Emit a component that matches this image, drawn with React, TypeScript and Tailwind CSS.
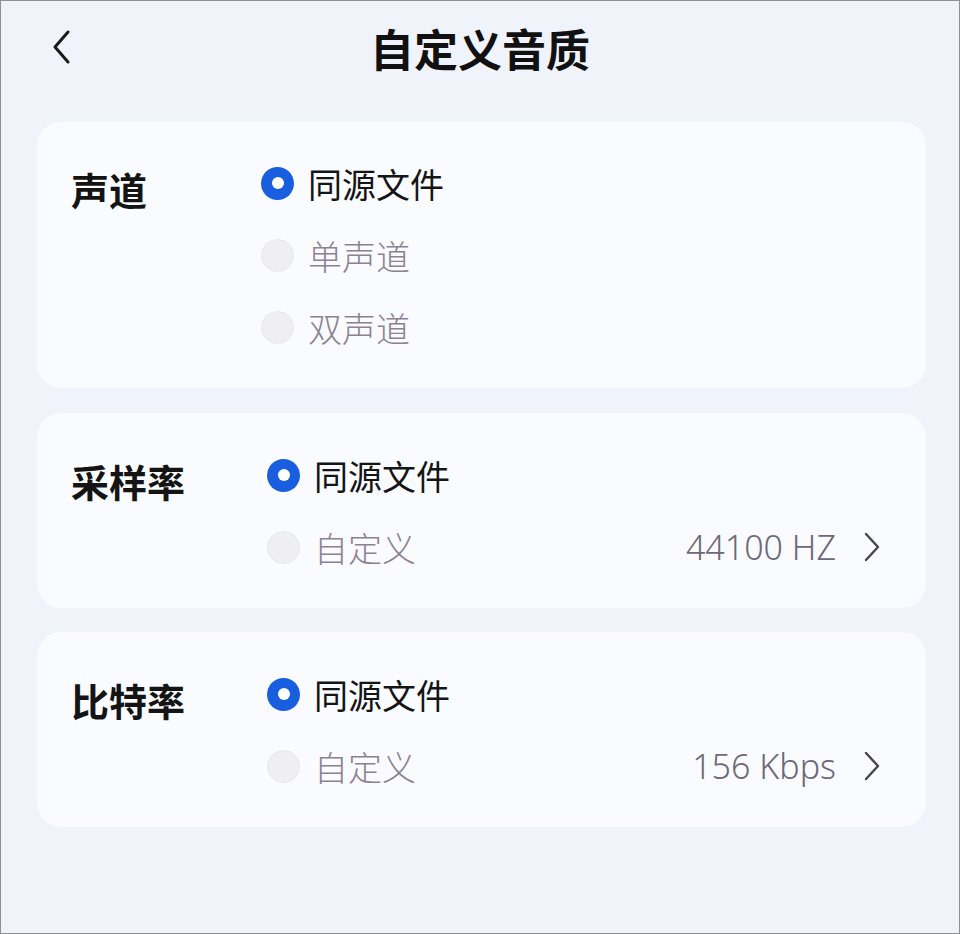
import React from "react";

const cjk = { fontFamily: '"Noto Sans CJK SC", "Noto Sans", sans-serif' };
const latin = { fontFamily: '"Noto Sans", "Noto Sans CJK SC", sans-serif' };

function Radio({ on }: { on: boolean }) {
  return on ? (
    <div className="w-[33px] h-[33px] rounded-full bg-[#1a5ee0] flex items-center justify-center shrink-0">
      <div className="w-[12px] h-[12px] rounded-full bg-white" />
    </div>
  ) : (
    <div className="w-[33px] h-[33px] rounded-full bg-[#efeff3] border border-[#e6e6ec] shrink-0" />
  );
}

function Chevron() {
  return (
    <svg width="18" height="30" viewBox="0 0 18 30" className="shrink-0">
      <path d="M3 2 L15 15 L3 28" fill="none" stroke="#4a4452" strokeWidth="2.4" strokeLinecap="round" strokeLinejoin="round" />
    </svg>
  );
}

type Opt = { text: string; on: boolean; value?: string };

function Card({ label, opts, col, pt, pb, extra = "" }: { label: string; opts: Opt[]; col: string; pt: string; pb: string; extra?: string }) {
  return (
    <div className={`bg-[#f9fbfe] rounded-[24px] ml-[36px] mr-[33px] flex pl-[34px] pr-[45px] ${pt} ${pb} ${extra}`}>
      <div className={`${col} shrink-0 pt-[5px]`}>
        <div className="h-[72px] flex items-center text-[38px] font-bold text-[#141414]" style={cjk}>
          {label}
        </div>
      </div>
      <div className="flex-1 flex flex-col">
        {opts.map((o, i) => (
          <div key={i} className="h-[72px] flex items-center">
            <Radio on={o.on} />
            <span
              className={`ml-[14px] text-[34px] ${o.on ? "text-[#151515] font-normal" : "text-[#8c8292] font-light"}`}
              style={cjk}
            >
              {o.text}
            </span>
            {o.value && (
              <div className="ml-auto flex items-center">
                <span className="text-[34px] font-light text-[#6f6878]" style={latin}>
                  {o.value}
                </span>
                <div className="ml-[27px]">
                  <Chevron />
                </div>
              </div>
            )}
          </div>
        ))}
      </div>
    </div>
  );
}

export default function App() {
  return (
    <div className="w-[960px] h-[934px] bg-[#f0f3f9] border border-[#8d9096] overflow-hidden">
      <div className="h-[94px] relative flex items-center justify-center">
        <svg width="22" height="36" viewBox="0 0 22 36" className="absolute left-[50px] top-[28px]">
          <path d="M17 3 L4 18 L17 33" fill="none" stroke="#1a1a1a" strokeWidth="3" strokeLinecap="round" strokeLinejoin="round" />
        </svg>
        <h1 className="text-[44px] font-bold text-[#111] leading-none" style={cjk}>
          自定义音质
        </h1>
      </div>
      <div className="mt-[27px] flex flex-col gap-[24px]">
        <Card
          label="声道"
          col="w-[190px]"
          pt="pt-[25px]"
          pb="pb-[25px]"
          opts={[
            { text: "同源文件", on: true },
            { text: "单声道", on: false },
            { text: "双声道", on: false },
          ]}
        />
        <Card
          label="采样率"
          col="w-[196px]"
          pt="pt-[26px]"
          pb="pb-[25px]"
          extra="mt-[1px]"
          opts={[
            { text: "同源文件", on: true },
            { text: "自定义", on: false, value: "44100 HZ" },
          ]}
        />
        <Card
          label="比特率"
          col="w-[196px]"
          pt="pt-[26px]"
          pb="pb-[25px]"
          opts={[
            { text: "同源文件", on: true },
            { text: "自定义", on: false, value: "156 Kbps" },
          ]}
        />
      </div>
    </div>
  );
}
